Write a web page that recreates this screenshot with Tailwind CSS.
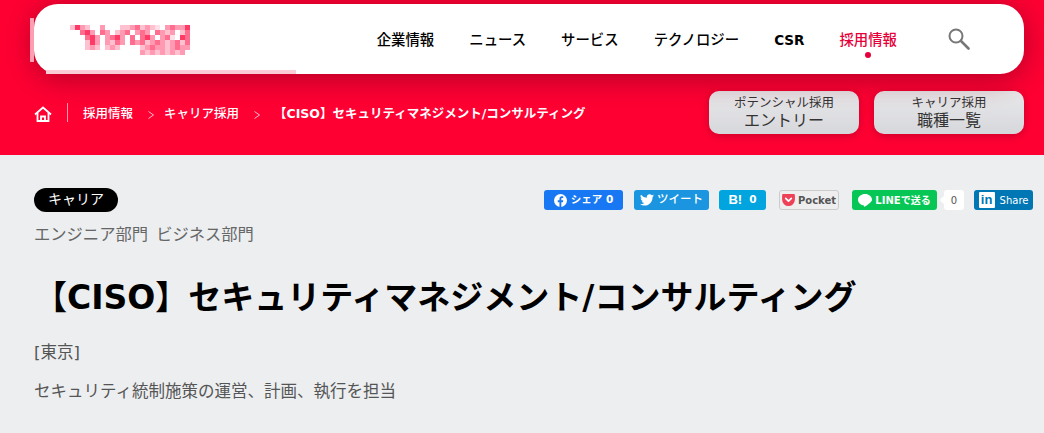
<!DOCTYPE html>
<html lang="ja">
  <head>
    <meta charset="UTF-8" />
    <title>【CISO】セキュリティマネジメント/コンサルティング</title>
    <script src="https://cdn.jsdelivr.net/npm/@tailwindcss/browser@4"></script>
  </head>
  <body class="bg-[#eceef0] text-black font-['DejaVu_Sans','Noto_Sans_CJK_JP',sans-serif] overflow-hidden">
    <!-- Red header -->
    <header class="h-[155px] bg-[#ff0033] pt-[4px] pl-[34px] pr-[20px]">
      <nav class="relative h-[70px] bg-white rounded-[24px] shadow-[0_4px_30px_rgba(120,0,30,0.6)] flex items-center pl-[36px] pr-[54px]">
        <!-- blurred edges of the mosaic -->
        <span class="absolute -left-[4px] top-[14px] h-[44px] w-[4px] bg-[#ff9db2]"></span>
        <span class="absolute left-[12px] bottom-0 h-[4px] w-[250px] bg-[#f9ccd6]"></span>
        <svg id="logo" class="w-[120px] h-[30px] mt-[2px]" viewBox="0 0 24 6" shape-rendering="crispEdges"></svg>
        <ul class="ml-auto pt-[3px] flex items-center gap-[35px] text-[14.4px] font-medium">
          <li>企業情報</li>
          <li>ニュース</li>
          <li>サービス</li>
          <li>テクノロジー</li>
          <li class="font-bold text-[13.5px]">CSR</li>
          <li class="relative text-[#e6003a]">採用情報<span class="absolute left-1/2 -translate-x-1/2 top-[22px] w-[6px] h-[6px] rounded-full bg-[#e6003a]"></span></li>
        </ul>
        <svg class="ml-[51px] w-[22px] h-[22px] text-[#777]" viewBox="0 0 22 22" fill="none" stroke="currentColor" stroke-width="2">
          <circle cx="8" cy="8" r="6.500" />
          <path d="M13 13 L20.500 20.500" stroke-width="2.600" stroke-linecap="round" />
        </svg>
      </nav>
      <div class="flex items-center mt-[17px]">
        <svg class="w-[18px] h-[16px] text-white mt-[2px]" viewBox="0 0 18 16" fill="none" stroke="currentColor" stroke-width="1.800">
          <path d="M1 8.500 L9 1.500 L17 8.500" />
          <path d="M3.500 7 V15 H14.500 V7" />
          <path d="M7 15 V10.500 H11 V15" />
        </svg>
        <span class="ml-[15px] h-[19px] border-l border-white/60"></span>
        <ol class="ml-[15px] pt-[4px] flex items-center text-[12.5px] text-white font-medium">
          <li>採用情報</li>
          <li class="ml-[15px] mr-[10px]">
            <svg class="w-[6px] h-[8px] text-[#ffc0cf]" viewBox="0 0 6 8" fill="none" stroke="currentColor"><path d="M0.500 0.500 L5.500 4 L0.500 7.500" /></svg>
          </li>
          <li>キャリア採用</li>
          <li class="ml-[15px] mr-[14px]">
            <svg class="w-[6px] h-[8px] text-[#ffc0cf]" viewBox="0 0 6 8" fill="none" stroke="currentColor"><path d="M0.500 0.500 L5.500 4 L0.500 7.500" /></svg>
          </li>
          <li class="font-bold">【CISO】セキュリティマネジメント/コンサルティング</li>
        </ol>
        <div class="ml-auto flex gap-[15px] text-[#333] text-center">
          <a class="w-[150px] h-[43px] rounded-[10px] bg-gradient-to-b from-[#eaeaec] to-[#d6d7db] shadow-[0_2px_8px_rgba(120,0,30,0.4)] flex flex-col justify-center">
            <span class="text-[12.5px] leading-[15px]">ポテンシャル採用</span>
            <span class="text-[16px] leading-[21px]">エントリー</span>
          </a>
          <a class="w-[150px] h-[43px] rounded-[10px] bg-gradient-to-b from-[#eaeaec] to-[#d6d7db] shadow-[0_2px_8px_rgba(120,0,30,0.4)] flex flex-col justify-center">
            <span class="text-[12.5px] leading-[15px]">キャリア採用</span>
            <span class="text-[16px] leading-[21px]">職種一覧</span>
          </a>
        </div>
      </div>
    </header>

    <main class="pl-[34px] pr-[11px] pt-[33px]">
      <div class="flex items-start justify-between">
        <span class="w-[84px] h-[24px] rounded-full bg-black text-white text-[14px] leading-[22px] pb-[2px] flex items-center justify-center">キャリア</span>
        <div class="flex items-center mt-[2px] h-[20px] text-[10.5px] font-bold text-white">
          <a class="w-[79px] h-full rounded-[3px] bg-[#1877f2] flex items-center justify-center gap-[4px]">
            <svg class="w-[13px] h-[13px]" viewBox="0 0 16 16"><circle cx="8" cy="8" r="8" fill="#fff" /><path fill="#1877f2" d="M9 16V10h2l.4-2.400H9V6.200c0-.8.3-1.200 1.200-1.200h1.200V3c-.5-.1-1.100-.1-1.700-.1-1.900 0-3 1.100-3 3.100v1.600H4.600V10h2.100v6z" /></svg>
            シェア 0
          </a>
          <a class="ml-[11px] w-[75px] h-full rounded-[3px] bg-[#1b95e0] flex items-center justify-center gap-[3px] font-medium text-[11.5px]">
            <svg class="w-[14px] h-[12px]" viewBox="0 0 24 20" fill="#fff"><path d="M24 2.400a9.800 9.800 0 0 1-2.800.8A4.900 4.900 0 0 0 23.300.5a9.800 9.800 0 0 1-3.100 1.200 4.900 4.900 0 0 0-8.400 4.500A14 14 0 0 1 1.700.9a4.900 4.900 0 0 0 1.500 6.600 4.900 4.900 0 0 1-2.200-.6v.1a4.900 4.900 0 0 0 3.900 4.800 4.900 4.900 0 0 1-2.200.1 4.900 4.900 0 0 0 4.600 3.400A9.900 9.900 0 0 1 0 17.300 14 14 0 0 0 7.500 19.500c9.100 0 14-7.500 14-14v-.6A10 10 0 0 0 24 2.400z" /></svg>
            ツイート
          </a>
          <a class="ml-[10px] w-[47px] h-full rounded-[3px] bg-[#00a4de] flex items-center justify-center gap-[7px]">
            <span class="text-[13px] font-['Liberation_Sans'] font-bold">B!</span><span>0</span>
          </a>
          <a class="ml-[13px] w-[60px] h-full rounded-[3px] bg-[#eeeeee] border border-[#ccc] text-[#555] flex items-center justify-center gap-[3px] font-bold text-[10px]">
            <svg class="w-[13px] h-[12px] shrink-0" viewBox="0 0 16 15"><path fill="#ee4056" d="M1.500 0h13A1.500 1.500 0 0 1 16 1.500V7A8 8 0 0 1 0 7V1.500A1.500 1.500 0 0 1 1.500 0z" /><path d="M4.500 5.500 8 9l3.500-3.500" fill="none" stroke="#fff" stroke-width="2.200" stroke-linecap="round" stroke-linejoin="round" /></svg>
            Pocket
          </a>
          <a class="ml-[13px] w-[85px] h-full rounded-[3px] bg-[#06c755] flex items-center justify-center gap-[3px] text-[10px]">
            <svg class="w-[14px] h-[13px] shrink-0" viewBox="0 0 24 22" fill="#fff"><path d="M12 0C5.400 0 0 4.400 0 9.800c0 4.800 4.300 8.900 10 9.700.9.200.6 1.200.5 2.200 0 .4.300.4.700.2 1.300-.7 7.100-4.200 9.900-7.300C23 12.800 24 11.400 24 9.800 24 4.400 18.600 0 12 0z" /></svg>
            LINEで送る
          </a>
          <span class="relative ml-[7px] w-[20px] h-full rounded-[3px] bg-white text-[#555] font-normal text-[10px] flex items-center justify-center">0<i class="absolute -left-[3px] top-[7px] w-[6px] h-[6px] bg-white rotate-45"></i></span>
          <a class="ml-[10px] w-[59px] h-full rounded-[3px] bg-[#0077b5] flex items-center justify-center gap-[5px] font-medium">
            <span class="w-[16px] h-[16px] bg-white text-[#0077b5] rounded-[1px] flex items-center justify-center text-[13px] font-bold font-['Liberation_Sans']">in</span>
            <span class="text-[10px]">Share</span>
          </a>
        </div>
      </div>
      <p class="mt-[10px] text-[16.3px] leading-[26px] text-[#666] [word-spacing:3px]">エンジニア部門 ビジネス部門</p>
      <h1 class="mt-[25px] text-[33px] leading-[50px] font-bold">【CISO】セキュリティマネジメント/コンサルティング</h1>
      <p class="mt-[17px] text-[16.5px] leading-[26px] text-[#555]">[東京]</p>
      <p class="mt-[13px] text-[16.5px] leading-[26px] text-[#555]">セキュリティ統制施策の運営、計画、執行を担当</p>
    </main>
    <script>
      // mosaic of the blurred logo, one letter per cell
      const fills = { a: "#ff3a66", b: "#ff6d8f", c: "#ff9ab2", d: "#ffc0cf", e: "#ffdfe7" };
      const rows = [
        "dacd..c...ddcbdcde.cbcca",
        "..bac.bc.dcb.cbc.bcdc.db",
        "...bac.cbac.b.bac.cbe.ab",
        "...dac.cdbc.bcbdcbcdcbdb",
        "...dcd.dcd....dcbccdcbcc",
        "..............cdcdcdcdc.",
      ];
      let cells = "";
      rows.forEach((row, y) => {
        [...row].forEach((ch, x) => {
          if (fills[ch]) cells += `<rect x="${x}" y="${y}" width="1" height="1" fill="${fills[ch]}" />`;
        });
      });
      document.getElementById("logo").innerHTML = cells;
    </script>
  </body>
</html>
